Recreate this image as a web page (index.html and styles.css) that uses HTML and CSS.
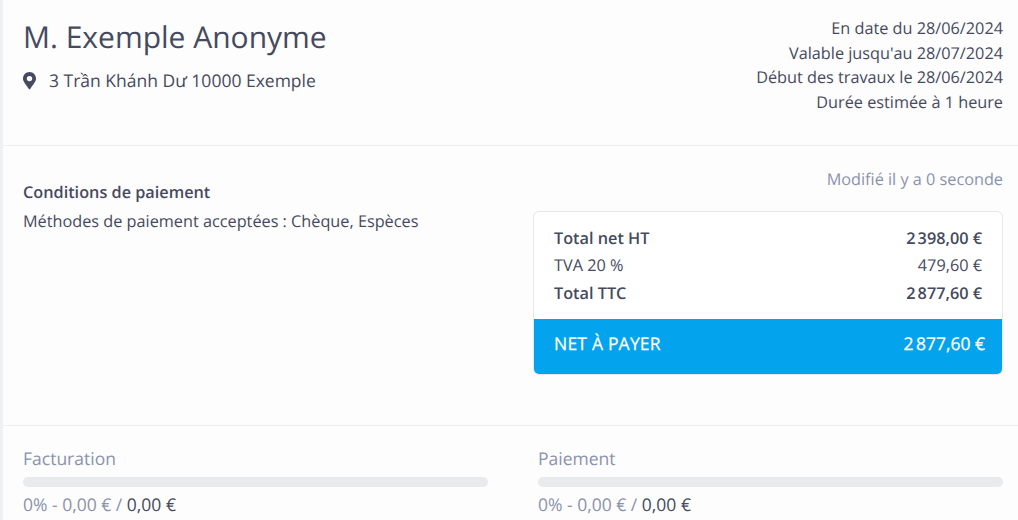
FILE: index.html
```html
<!DOCTYPE html>
<html lang="fr">
<head>
<meta charset="utf-8">
<title>Devis</title>
<link rel="stylesheet" href="styles.css">
</head>
<body>
<main class="panel">
  <header class="head">
    <div class="client">
      <h1 class="name">M. Exemple Anonyme</h1>
      <p class="address">
        <svg class="pin" viewBox="0 0 384 512" width="13" height="17.5"><path fill="#454a60" d="M172.3 501.7C27 291 0 269.4 0 192 0 86 86 0 192 0s192 86 192 192c0 77.4-27 99-172.3 309.7-9.500 13.800-29.900 13.800-39.400 0zM192 272a80 80 0 1 0 0-160 80 80 0 0 0 0 160z"/></svg>
        <span>3 Trần Khánh Dư 10000 Exemple</span>
      </p>
    </div>
    <div class="dates">
      <div>En date du 28/06/2024</div>
      <div>Valable jusqu'au 28/07/2024</div>
      <div>Début des travaux le 28/06/2024</div>
      <div>Durée estimée à 1 heure</div>
    </div>
  </header>
  <section class="middle">
    <div class="terms">
      <h2 class="terms-title">Conditions de paiement</h2>
      <p class="terms-text">Méthodes de paiement acceptées : Chèque, Espèces</p>
    </div>
    <div class="summary">
      <div class="modified">Modifié il y a 0 seconde</div>
      <div class="totals">
        <div class="rows">
          <div class="row strong"><span>Total net HT</span><span>2&#8239;398,00 €</span></div>
          <div class="row"><span>TVA 20 %</span><span>479,60 €</span></div>
          <div class="row strong"><span>Total TTC</span><span>2&#8239;877,60 €</span></div>
        </div>
        <div class="net"><span>NET À PAYER</span><span>2&#8239;877,60 €</span></div>
      </div>
    </div>
  </section>
  <section class="progress">
    <div class="meter">
      <div class="meter-label">Facturation</div>
      <div class="track"></div>
      <div class="meter-value">0% - 0,00 € / <span class="meter-total">0,00 €</span></div>
    </div>
    <div class="meter">
      <div class="meter-label">Paiement</div>
      <div class="track"></div>
      <div class="meter-value">0% - 0,00 € / <span class="meter-total">0,00 €</span></div>
    </div>
  </section>
</main>
</body>
</html>
```
FILE: styles.css
```css
html, body {
  margin: 0;
  height: 520px;
  overflow: hidden;
  background: #eef1f3;
  font-family: "Open Sans", sans-serif;
  color: #454a60;
  text-rendering: geometricPrecision;
}
.panel {
  margin-left: 3px;
  height: 520px;
  background: #fdfdfd;
  overflow: hidden;
}
.head {
  display: flex;
  justify-content: space-between;
  box-sizing: border-box;
  height: 146px;
  padding: 16px 15px 0 20px;
  border-bottom: 1px solid #eceef0;
}
.name {
  margin: 0;
  font-size: 30px;
  font-weight: 400;
  line-height: 42px;
}
.address {
  display: flex;
  align-items: center;
  gap: 13px;
  margin: 12px 0 0;
  font-size: 17.5px;
  line-height: 22px;
}
.pin { display: block; }
.dates {
  text-align: right;
  font-size: 16.25px;
  line-height: 24.5px;
}
.middle {
  display: flex;
  justify-content: space-between;
  height: 279px;
  padding: 0 15px 0 20px;
  border-bottom: 1px solid #eceef0;
}
.terms { padding-top: 35px; }
.terms-title {
  margin: 0;
  font-size: 16.25px;
  font-weight: 600;
  line-height: 22px;
}
.terms-text {
  margin: 7px 0 0;
  font-size: 16.25px;
  line-height: 22px;
}
.summary { width: 470px; padding-top: 22px; }
.modified {
  text-align: right;
  font-size: 16.25px;
  line-height: 22px;
  color: #8a92ad;
}
.totals {
  margin-top: 21px;
  border: 1px solid #e5e7eb;
  border-radius: 6px;
  overflow: hidden;
  background: #fff;
}
.rows { padding: 12.75px 20px 12px; }
.row {
  display: flex;
  justify-content: space-between;
  font-size: 16.25px;
  line-height: 27.5px;
}
.strong { font-weight: 600; }
.net {
  display: flex;
  justify-content: space-between;
  margin: 0 -1px -1px;
  padding: 13px 18px 19px 21px;
  background: #03a4ed;
  color: #fff;
  font-size: 17.5px;
  font-weight: 500;
  letter-spacing: 0.2px;
  line-height: 24px;
  -webkit-text-stroke: 0.25px #fff;
}
.progress {
  display: grid;
  grid-template-columns: 465px 465px;
  column-gap: 50px;
  padding: 21px 15px 0 20px;
}
.meter-label {
  font-size: 17.5px;
  line-height: 24px;
  color: #8a92ad;
}
.track {
  height: 10px;
  margin-top: 6px;
  border-radius: 5px;
  background: #e9eaeb;
}
.meter-value {
  margin-top: 6px;
  font-size: 17.5px;
  line-height: 24px;
  color: #8a92ad;
}
.meter-total { color: #454a60; }
```
